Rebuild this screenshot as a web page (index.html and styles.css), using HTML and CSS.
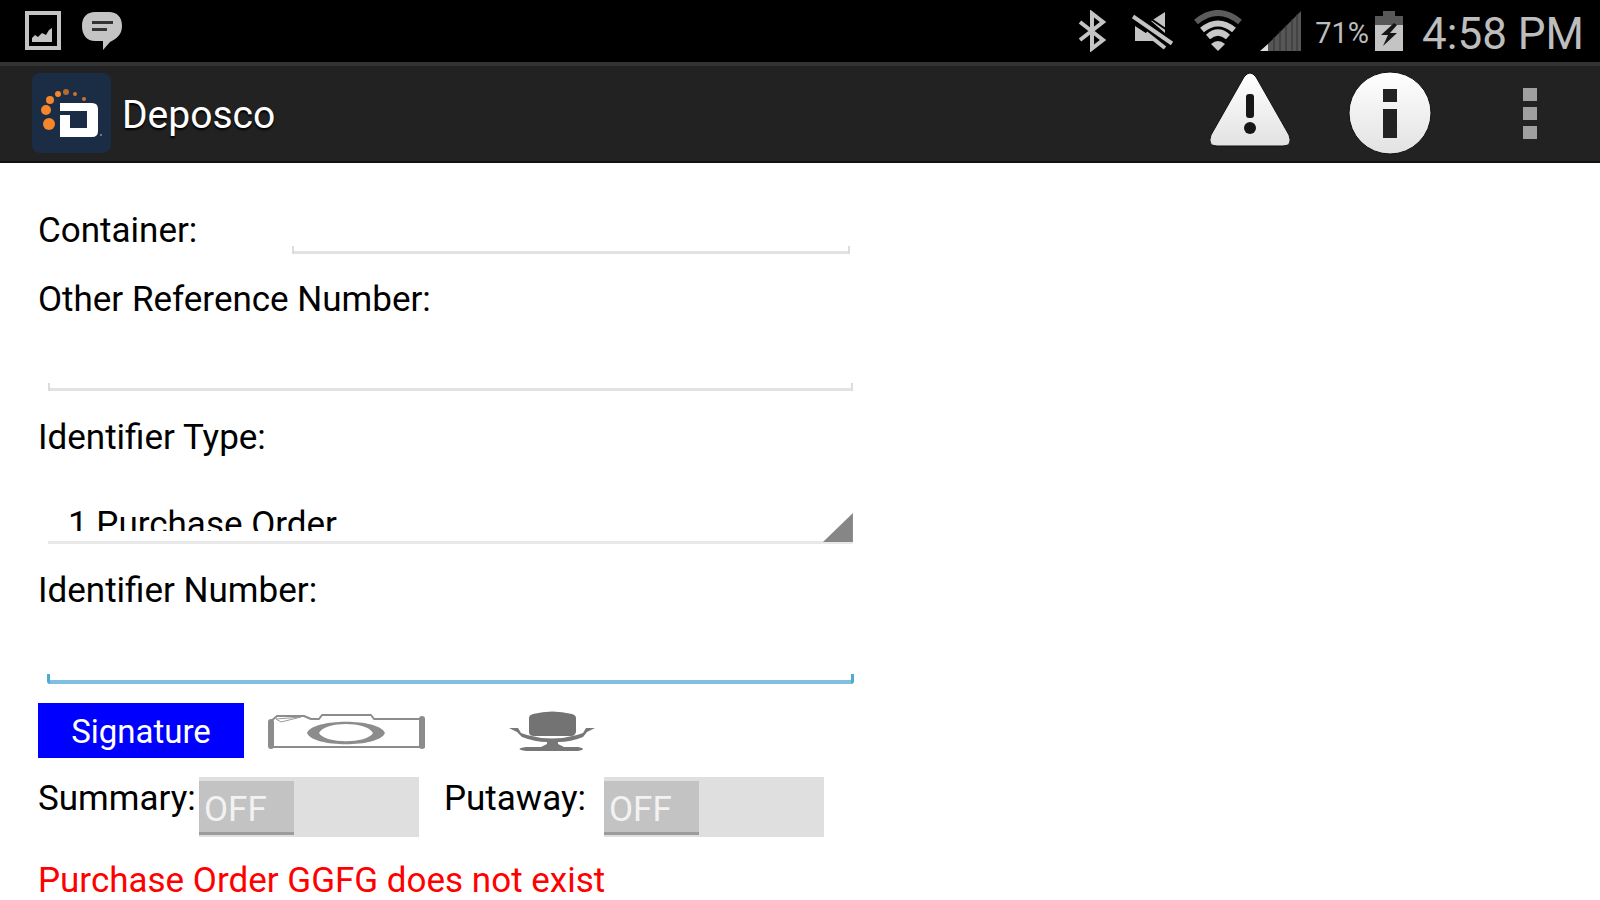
FILE: index.html
```html
<!DOCTYPE html>
<html lang="en">
<head>
<meta charset="utf-8">
<title>Deposco</title>
<meta name="viewport" content="width=device-width, initial-scale=1">
<link rel="stylesheet" href="styles.css">
</head>
<body>
<div class="status-bar">
  <div class="status-group">
    <svg class="icon" width="36" height="40" viewBox="0 0 36 40" role="img" aria-label="Image saved">
      <rect x="2" y="2" width="32" height="35" fill="none" stroke="#c4c4c4" stroke-width="4"/>
      <path d="M7 31V27l3-3 3 2 4-4 4 2 3-5 3-2v14z" fill="#c4c4c4"/>
    </svg>
    <svg class="icon" width="42" height="40" viewBox="0 0 42 40" role="img" aria-label="Message">
      <path d="M14 1h14c8 0 13 5 13 14s-6 13-12 16l-7 8v-9h-8C6 30 1 24 1 15S6 1 14 1z" fill="#c4c4c4"/>
      <path d="M11 11.500h21M11 18.500h15" stroke="#333" stroke-width="3"/>
    </svg>
  </div>
  <div class="status-group status-right">
    <svg class="icon" width="30" height="42" viewBox="0 0 30 42" role="img" aria-label="Bluetooth">
      <path d="M2 12l23 18-11 8.500V3.500L25 12 2 30" fill="none" stroke="#c4c4c4" stroke-width="4"/>
    </svg>
    <svg class="icon mute" width="42" height="40" viewBox="0 0 42 40" role="img" aria-label="Muted">
      <path d="M19 10L33 1v21zM3 15l23 15H3z" fill="#c4c4c4"/>
      <path d="M3 11.500l35 23.500M19 8l16 11" stroke="#000" stroke-width="2"/>
      <path d="M1 5.500l39 27M14 22l19 15" stroke="#c4c4c4" stroke-width="4"/>
    </svg>
    <svg class="icon wifi" width="48" height="42" viewBox="0 0 48 42" role="img" aria-label="Wi-Fi">
      <path d="M2 12Q24-6 46 12" fill="none" stroke="#5c5c5c" stroke-width="6"/>
      <path d="M8 20Q24 7 40 20M14 27Q24 18 34 27" fill="none" stroke="#c8c8c8" stroke-width="6"/>
      <path d="M17 34Q24 28 31 34L24 41z" fill="#c8c8c8"/>
    </svg>
    <svg class="icon" width="42" height="40" viewBox="0 0 42 40" role="img" aria-label="Signal">
      <path d="M1 40L41 0v40z" fill="#565656"/>
      <path d="M14 26v14M20 20v20M26 14v26M32 8v32M37 3v37" stroke="#333" stroke-width="1"/>
      <path d="M0 40l8-7v7z" fill="#ddd"/>
    </svg>
    <span class="battery-level">71%</span>
    <svg class="icon" width="30" height="40" viewBox="0 0 30 40" role="img" aria-label="Battery charging">
      <path d="M1 14V5h8V0h12v5h8v9z" fill="#585858"/>
      <path d="M1 14h28v26H1z" fill="#c4c4c4"/>
      <path d="M20 12L7 24h7L9 35l14-13h-7l7-8z" fill="#161616"/>
    </svg>
    <span class="clock">4:58 PM</span>
  </div>
</div>

<header class="action-bar">
  <svg class="logo" width="79" height="80" viewBox="0 0 79 80" role="img" aria-label="Deposco logo">
    <rect width="79" height="80" rx="8" fill="#1b2c45"/>
    <g fill="#f5862a">
      <circle cx="17" cy="51" r="6"/><circle cx="14" cy="37" r="5"/><circle cx="18" cy="27" r="4"/>
      <circle cx="26" cy="21" r="3"/><circle cx="34" cy="19" r="3" opacity=".7"/><circle cx="43" cy="21" r="2" opacity=".8"/><circle cx="52" cy="26" r="2" opacity=".8"/>
    </g>
    <path d="M28 30h32q6 0 6 6v22q0 6-6 6H28V42h10v13h17V38H28z" fill="#fff"/>
    <circle cx="69" cy="62" r="1" fill="#8791a0"/>
  </svg>
  <h1 class="title">Deposco</h1>
  <div class="actions">
    <button class="action" type="button" aria-label="Warnings">
      <svg width="84" height="84" viewBox="0 0 84 84">
        <defs><linearGradient id="shine" x1="0" y1="0" x2="0" y2="1"><stop offset="0" stop-color="#fff"/><stop offset="1" stop-color="#e2e2e2"/></linearGradient></defs>
        <path d="M36 6q6-8 12 0l33 58q4 11-6 11H9q-10 0-6-11z" fill="url(#shine)" stroke="#111" stroke-width="1"/>
        <rect x="38" y="23" width="8" height="24" rx="3" fill="#161616"/><circle cx="42" cy="57" r="6" fill="#161616"/>
      </svg>
    </button>
    <button class="action" type="button" aria-label="Information">
      <svg width="84" height="84" viewBox="0 0 84 84">
        <circle cx="42" cy="42" r="41" fill="url(#shine)" stroke="#111" stroke-width="1"/>
        <path d="M35 18h14v13H35zM35 38h14v29H35z" fill="#222"/>
      </svg>
    </button>
    <button class="action menu" type="button" aria-label="More options">
      <svg width="16" height="52" viewBox="0 0 16 52"><path d="M1 1h14v13H1zM1 20h14v13H1zM1 39h14v13H1z" fill="#a0a0a0"/></svg>
    </button>
  </div>
</header>

<main class="content">
  <form class="form">
    <div class="inline-field">
      <label for="container">Container:</label>
      <input class="text-field" id="container" type="text">
    </div>
    <div class="field">
      <label for="reference">Other Reference Number:</label>
      <input class="text-field" id="reference" type="text">
    </div>
    <div class="field">
      <label for="id-type">Identifier Type:</label>
      <div class="spinner">
        <div class="spinner-clip">
          <select id="id-type"><option>1 Purchase Order</option></select>
        </div>
      </div>
    </div>
    <div class="field">
      <label for="id-number">Identifier Number:</label>
      <input class="text-field active" id="id-number" type="text">
    </div>
    <div class="tools">
      <button class="signature" type="button">Signature</button>
      <button class="tool camera" type="button" aria-label="Take photo">
        <svg width="160" height="36" viewBox="0 0 160 36">
          <path d="M3 34V9l7-6h27l7 3h8l3-4h49l3 4h50v28z" fill="none" stroke="#8c8c8c" stroke-width="2" stroke-linejoin="round"/>
          <path d="M4 33V9M155 6v27" stroke="#8c8c8c" stroke-width="6" stroke-linecap="round"/>
          <path d="M9 6L34 4 14 9z" fill="#fff" stroke="#999" stroke-width="1"/>
          <path fill-rule="evenodd" d="M40 20C46 5 112 5 118 20 112 35 46 35 40 20zM52 20C58 31 100 31 106 20 100 8 58 8 52 20z" fill="#8c8c8c"/>
        </svg>
      </button>
      <button class="tool" type="button" aria-label="Record voice">
        <svg width="88" height="42" viewBox="0 0 88 42">
          <path d="M24 4Q43-1 63 4Q67 5 67 8V22Q66 26 62 26H25Q20 26 20 22V8Q20 5 24 4z" fill="#737373"/>
          <path d="M0 18h9l3 5 6 2q25 7 50 0l6-2 3-5h9l-8 4-4 5q-12 5-25 5v2l6 3h14q10 2 0 4H17q-13-2 0-4h15l6-3v-2q-12 0-25-5l-5-5z" fill="#777"/>
        </svg>
      </button>
    </div>
    <div class="toggles">
      <label class="toggle">
        <span class="summary-text">Summary:</span>
        <span class="switch"><input type="checkbox" role="switch"><span class="thumb">OFF</span></span>
      </label>
      <label class="toggle">
        <span class="putaway-text">Putaway:</span>
        <span class="switch"><input type="checkbox" role="switch"><span class="thumb">OFF</span></span>
      </label>
    </div>
    <p class="error" role="alert">Purchase Order GGFG does not exist</p>
  </form>
</main>
</body>
</html>
```
FILE: styles.css
```css
* { box-sizing: border-box; }

body {
  margin: 0;
  background: #fff;
  color: #000;
  font-family: Roboto, "Liberation Sans", sans-serif;
  font-size: 35px;
  line-height: 36px;
}

button, input, select {
  margin: 0;
  padding: 0;
  border: 0;
  border-radius: 0;
  background: none;
  color: inherit;
  font: inherit;
}

svg { display: block; flex: none; }

/* Status bar */
.status-bar {
  display: flex;
  justify-content: space-between;
  align-items: center;
  height: 62px;
  padding: 0 16px 0 25px;
  background: #000;
  color: #bdbdbd;
}
.status-group { display: flex; align-items: center; gap: 20px; }
.status-right { gap: 18px; }
.mute { margin-left: 6px; }
.wifi { margin-left: 2px; }
.battery-level { margin: 4px -13px 0 -5px; font-size: 29px; }
.clock { margin-top: 6px; font-size: 44px; }

/* Action bar */
.action-bar {
  display: flex;
  align-items: center;
  height: 101px;
  padding: 0 28px 2px 32px;
  border-top: 4px solid #333;
  border-bottom: 2px solid #111;
  background: #222;
}
.title {
  margin: 4px 0 0 11px;
  color: #fff;
  font-size: 39px;
  font-weight: 400;
  line-height: 48px;
  text-shadow: 0 2px 2px #000;
}
.actions { display: flex; align-items: center; margin-left: auto; gap: 56px; }
.menu { display: flex; justify-content: center; width: 84px; }

/* Form */
.content { padding: 50px 38px 0; }
.form { display: flex; flex-direction: column; width: 54%; }
.inline-field {
  display: grid;
  grid-template-columns: 254px 1fr;
  margin: 0 11px 28px 0;
}
.field { display: flex; flex-direction: column; margin-bottom: 29px; }

.text-field {
  height: 41px;
  padding: 0 12px;
  outline: 0;
  background:
    linear-gradient(#dcdcdc, #dcdcdc) left bottom / 2px 8px no-repeat,
    linear-gradient(#dcdcdc, #dcdcdc) right bottom / 2px 8px no-repeat,
    linear-gradient(#e2e2e2, #e2e2e2) left bottom / 100% 3px no-repeat;
}
.field .text-field { height: 73px; margin: 0 8px 0 10px; }
.field .active {
  height: 75px;
  margin: 0 7px 0 9px;
  border-radius: 0 0 3px 3px;
  background:
    linear-gradient(#4fa9d0, #4fa9d0) left bottom / 3px 10px no-repeat,
    linear-gradient(#4fa9d0, #4fa9d0) right bottom / 3px 10px no-repeat,
    linear-gradient(#7fc0e0, #7fc0e0) left bottom / 100% 4px no-repeat;
}

.spinner {
  position: relative;
  height: 88px;
  margin: 0 8px 0 10px;
  border-bottom: 3px solid #e8e8e8;
}
.spinner::after {
  content: "";
  position: absolute;
  right: 0;
  bottom: -1px;
  width: 30px;
  height: 29px;
  background: #868686;
  clip-path: polygon(100% 0, 100% 100%, 0 100%);
}
/* The row is shorter than its text, so the lower edge of the value is cut */
.spinner-clip { height: 75px; overflow: hidden; }
.spinner-clip select {
  width: 100%;
  height: 92px;
  padding: 46px 32px 0 20px;
  appearance: none;
  outline: 0;
}

.tools {
  display: flex;
  align-items: center;
  height: 55px;
  margin: -10px 0 19px;
}
.signature {
  width: 206px;
  height: 55px;
  padding-top: 3px;
  background: #00f;
  color: #fff;
  font-size: 33px;
}
.camera { margin: 0 82px 0 23px; }

.toggles { display: flex; gap: 25px; height: 60px; }
.toggle { display: flex; }
.summary-text { width: 161px; padding-top: 4px; }
.putaway-text { width: 160px; padding-top: 4px; }
.switch { position: relative; width: 220px; height: 60px; padding-top: 4px; background: #dfdfdf; }
.switch input { position: absolute; inset: 0; width: 100%; height: 100%; opacity: 0; }
.thumb {
  display: block;
  width: 95px;
  height: 54px;
  padding: 11px 0 0 5px;
  border-bottom: 3px solid #9c9c9c;
  background: #c3c3c3;
  color: #f2f2f2;
}

.error { margin: 26px 0 0; color: #f00; }
```
